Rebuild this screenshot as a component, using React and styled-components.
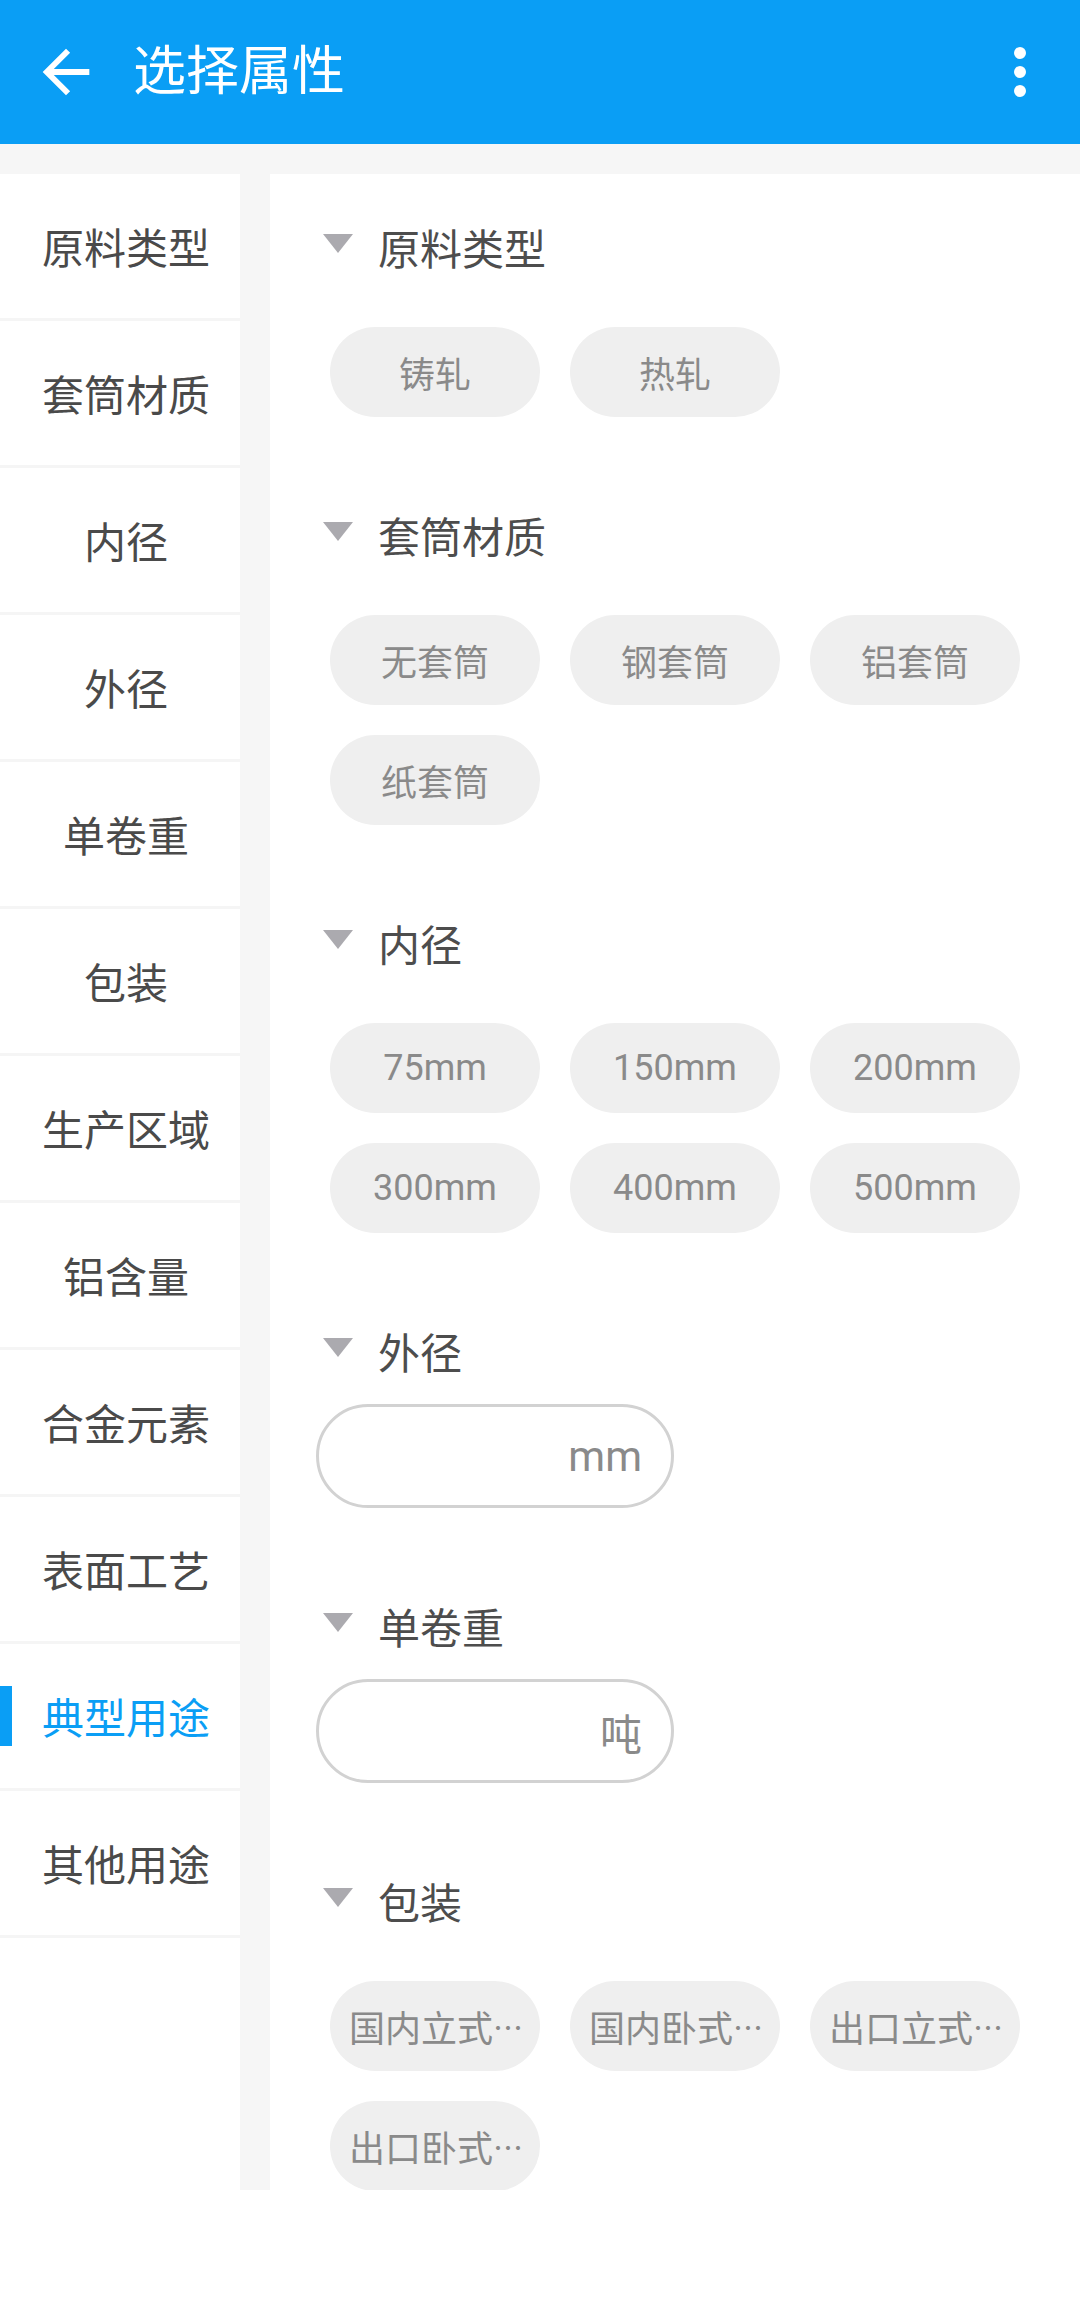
import React, { useState } from "react";
import styled, { createGlobalStyle } from "styled-components";

const BLUE = "#0A9EF5";

const GlobalStyle = createGlobalStyle`
  html, body {
    margin: 0;
    padding: 0;
    background: #ffffff;
  }
  body {
    font-family: Roboto, "Noto Sans CJK SC", sans-serif;
  }
  * {
    box-sizing: border-box;
  }
`;

const categories = [
  "原料类型",
  "套筒材质",
  "内径",
  "外径",
  "单卷重",
  "包装",
  "生产区域",
  "铝含量",
  "合金元素",
  "表面工艺",
  "典型用途",
  "其他用途",
];

const sections = [
  { title: "原料类型", options: ["铸轧", "热轧"] },
  { title: "套筒材质", options: ["无套筒", "钢套筒", "铝套筒", "纸套筒"] },
  {
    title: "内径",
    options: ["75mm", "150mm", "200mm", "300mm", "400mm", "500mm"],
  },
  { title: "外径", unit: "mm" },
  { title: "单卷重", unit: "吨" },
  {
    title: "包装",
    options: ["国内立式", "国内卧式", "出口立式", "出口卧式"],
    cut: true,
  },
];

const App = () => {
  const [active, setActive] = useState("典型用途");

  return (
    <>
      <GlobalStyle />
      <Page>
        <TopBar>
          <BackIcon viewBox="0 0 24 24">
            <path
              fill="#ffffff"
              d="M20 11H7.83l5.59-5.59L12 4l-8 8 8 8 1.41-1.41L7.83 13H20v-2z"
            />
          </BackIcon>
          <Title>选择属性</Title>
          <MoreIcon viewBox="0 0 24 62">
            <circle cx="12" cy="11" r="6" fill="#ffffff" />
            <circle cx="12" cy="30" r="6" fill="#ffffff" />
            <circle cx="12" cy="49" r="6" fill="#ffffff" />
          </MoreIcon>
        </TopBar>

        <Body>
          <Sidebar>
            {categories.map((name) => (
              <NavItem
                key={name}
                $active={name === active}
                onClick={() => setActive(name)}
              >
                {name}
              </NavItem>
            ))}
          </Sidebar>

          <Content>
            {sections.map((sec) => (
              <Section key={sec.title}>
                <Heading>
                  <Caret viewBox="0 0 30 19">
                    <polygon points="0,0 30,0 15,19" fill="#ABAAAF" />
                  </Caret>
                  <span>{sec.title}</span>
                </Heading>
                {sec.options ? (
                  <ChipGrid>
                    {sec.options.map((opt) => (
                      <Chip key={opt}>
                        {opt}
                        {sec.cut && <Dots>⋯</Dots>}
                      </Chip>
                    ))}
                  </ChipGrid>
                ) : (
                  <InputBox>
                    <Field type="text" />
                    <Unit>{sec.unit}</Unit>
                  </InputBox>
                )}
              </Section>
            ))}
          </Content>
        </Body>
      </Page>
    </>
  );
};

const Page = styled.div`
  width: 1080px;
`;

const TopBar = styled.header`
  height: 144px;
  background: ${BLUE};
  display: flex;
  align-items: center;
`;

const BackIcon = styled.svg`
  width: 70px;
  height: 70px;
  margin-left: 31px;
  flex-shrink: 0;
`;

const Title = styled.h1`
  margin: 0 0 0 32px;
  font-size: 53px;
  font-weight: 400;
  color: #ffffff;
  line-height: 1;
`;

const MoreIcon = styled.svg`
  width: 24px;
  height: 62px;
  margin-left: auto;
  margin-right: 48px;
  margin-top: 2px;
`;

const Body = styled.div`
  height: 2046px;
  padding-top: 30px;
  background: #f6f6f6;
  display: flex;
  gap: 30px;
`;

const Sidebar = styled.nav`
  width: 240px;
  flex-shrink: 0;
  background: #ffffff;
`;

const NavItem = styled.div`
  position: relative;
  height: 147px;
  padding: 0 0 2px 12px;
  border-bottom: 3px solid #f5f5f5;
  display: flex;
  align-items: center;
  justify-content: center;
  font-size: 42px;
  color: ${(p) => (p.$active ? BLUE : "#4a4a4a")};
  cursor: pointer;

  &::before {
    content: "";
    display: ${(p) => (p.$active ? "block" : "none")};
    position: absolute;
    left: 0;
    top: 42px;
    width: 12px;
    height: 60px;
    background: ${BLUE};
  }
`;

const Content = styled.main`
  flex: 1;
  background: #ffffff;
  overflow: hidden;
  padding-top: 48px;
`;

const Section = styled.section`
  margin-bottom: 93px;
`;

const Heading = styled.div`
  height: 56px;
  display: flex;
  align-items: center;
  padding: 0 0 8px 53px;
  font-size: 42px;
  color: #4d4d4d;
`;

const Caret = styled.svg`
  width: 30px;
  height: 19px;
  margin-right: 25px;
  align-self: flex-start;
  margin-top: 12px;
`;

const ChipGrid = styled.div`
  display: grid;
  grid-template-columns: repeat(3, 210px);
  gap: 30px;
  margin: 49px 0 0 60px;
`;

const Chip = styled.div`
  height: 90px;
  border-radius: 45px;
  background: #efefef;
  color: #8a8a8a;
  font-size: 36px;
  display: flex;
  align-items: center;
  justify-content: center;
  white-space: nowrap;
  overflow: hidden;
`;

const Dots = styled.span`
  font-family: "Noto Sans CJK SC", sans-serif;
  font-size: 30px;
  letter-spacing: -2px;
`;

const InputBox = styled.div`
  width: 358px;
  height: 104px;
  margin: 22px 0 0 46px;
  border: 3px solid #d2d2d2;
  border-radius: 52px;
  display: flex;
  align-items: center;
  padding: 0 29px 0 36px;
`;

const Field = styled.input`
  flex: 1;
  min-width: 0;
  border: none;
  outline: none;
  background: transparent;
  font-size: 42px;
  color: #4d4d4d;
  font-family: inherit;
`;

const Unit = styled.span`
  font-size: 42px;
  color: #8a8a8a;
`;

export default App;
